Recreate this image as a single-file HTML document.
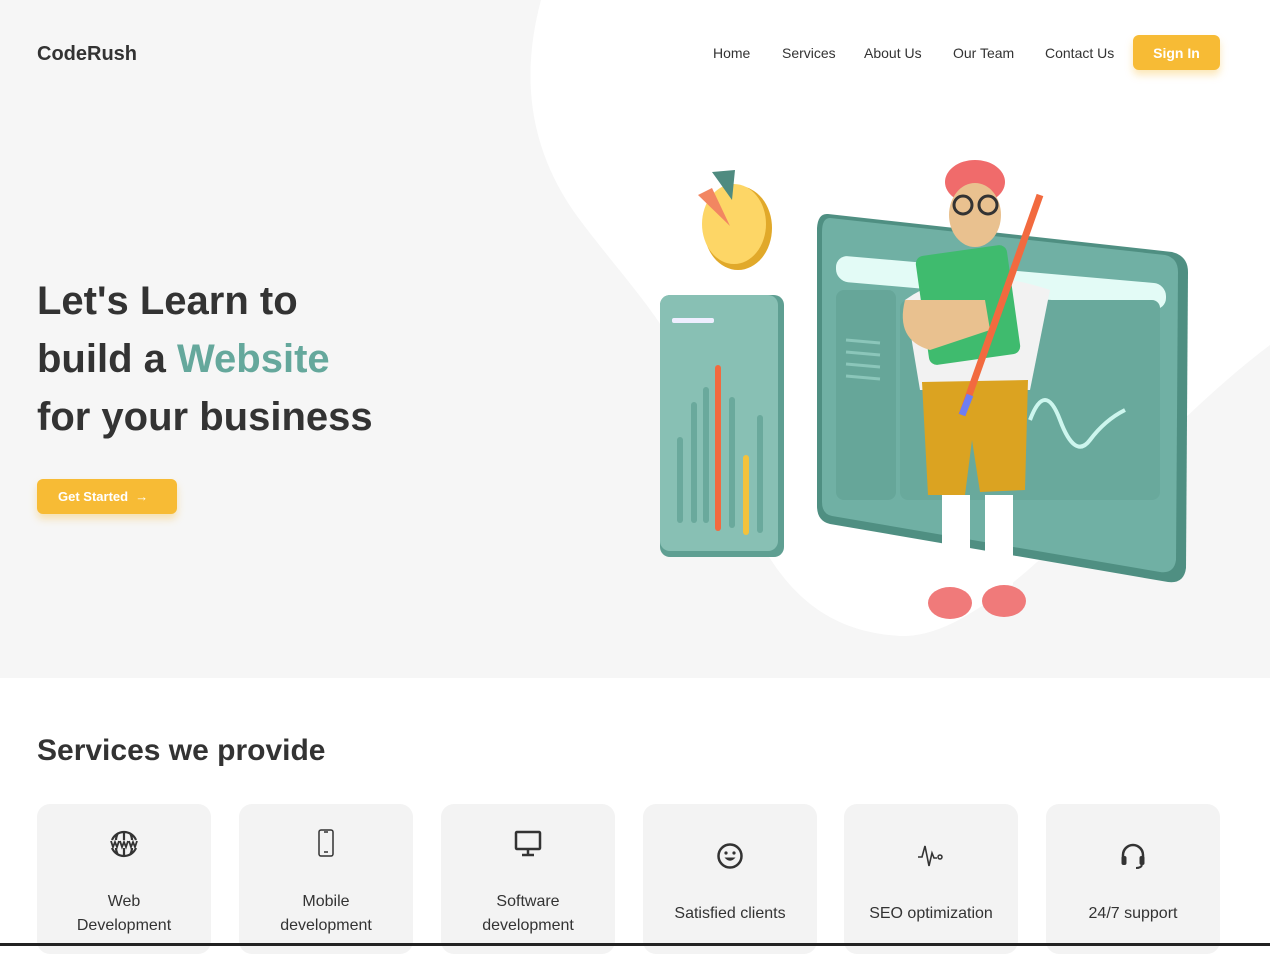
<!DOCTYPE html>
<html><head><meta charset="utf-8"><style>
*{margin:0;padding:0;box-sizing:border-box}
body{width:1270px;height:946px;overflow:hidden;background:#fff;font-family:"Liberation Sans",sans-serif;color:#333;position:relative}
.hero{position:absolute;left:0;top:0;width:1270px;height:678px;background:#f6f6f6;overflow:hidden}
.logo{position:absolute;left:37px;top:43px;font-size:20px;font-weight:bold;color:#333}
nav{position:absolute;top:45px;font-size:14px;color:#333}
nav span{position:absolute;white-space:nowrap}
.signin{position:absolute;left:1133px;top:35px;width:87px;height:35px;background:#f7bb35;border-radius:6px;color:#fff;font-weight:bold;font-size:14px;text-align:center;line-height:36px;box-shadow:0 5px 8px rgba(247,187,53,.35)}
h1{position:absolute;left:37px;top:272px;font-size:40px;line-height:58px;font-weight:bold;color:#333}
h1 em{font-style:normal;color:#65a89c}
.gs{position:absolute;left:37px;top:479px;width:140px;height:35px;background:#f7bb35;border-radius:6px;color:#fff;font-weight:bold;font-size:13px;line-height:36px;padding-left:21px;box-shadow:0 5px 8px rgba(247,187,53,.35)}
h2{position:absolute;left:37px;top:734px;font-size:30px;font-weight:bold;color:#333}
.card{position:absolute;top:804px;width:174px;height:150px;background:#f3f3f3;border-radius:13px;text-align:center;font-size:16px;color:#333}
.card svg{position:absolute;left:72px;top:25px}
.card .t{position:absolute;left:0;right:0;top:86px;line-height:24px}
.card .t1{top:98px}
.line{position:absolute;left:0;top:943px;width:1270px;height:3px;background:#222}
</style></head><body>
<div class="hero">
<svg width="1270" height="678" style="position:absolute;left:0;top:0">
<path d="M541 0 C525 60 520 140 580 220 C640 300 680 330 720 450 C760 560 800 630 900 636 C1000 640 1130 450 1270 345 L1270 0 Z" fill="#fff"/>
<rect x="660" y="295" width="124" height="262" rx="10" fill="#5f9f92"/>
<rect x="660" y="295" width="118" height="256" rx="10" fill="#88c0b4"/>
<rect x="672" y="318" width="42" height="5" rx="2" fill="#eef"/>
<g stroke-linecap="round" stroke-width="6">
<line x1="680" y1="440" x2="680" y2="520" stroke="#6aa99c"/><line x1="694" y1="405" x2="694" y2="520" stroke="#6aa99c"/><line x1="706" y1="390" x2="706" y2="520" stroke="#6aa99c"/>
<line x1="718" y1="368" x2="718" y2="528" stroke="#f26a3f"/><line x1="732" y1="400" x2="732" y2="525" stroke="#6aa99c"/><line x1="746" y1="458" x2="746" y2="532" stroke="#f3c23b"/><line x1="760" y1="418" x2="760" y2="530" stroke="#6aa99c"/>
</g>
<ellipse cx="738" cy="228" rx="34" ry="42" fill="#e1a92a"/>
<ellipse cx="734" cy="224" rx="32" ry="40" fill="#fdd666"/>
<path d="M730 226 L698 195 L712 188 Z" fill="#f28661"/>
<path d="M712 172 L735 170 L732 200 Z" fill="#4f8b80"/>
<path d="M828 214 L1172 252 Q1188 256 1188 272 L1186 568 Q1184 584 1168 582 L830 524 Q817 521 817 506 L817 228 Q818 213 828 214 Z" fill="#4f8f82"/>
<path d="M830 218 L1165 255 Q1178 258 1178 272 L1176 560 Q1174 574 1160 572 L832 516 Q822 514 822 502 L822 232 Q822 218 830 218 Z" fill="#70b0a4"/>
<rect x="836" y="256" width="330" height="26" rx="12" fill="#e3fbf6" transform="skewY(5) translate(0,-74)"/>
<rect x="836" y="290" width="60" height="210" rx="8" fill="#66a699"/>
<rect x="900" y="300" width="260" height="200" rx="8" fill="#69a99c"/>
<g stroke="#8bc6ba" stroke-width="3"><line x1="846" y1="340" x2="880" y2="343"/><line x1="846" y1="352" x2="880" y2="355"/><line x1="846" y1="364" x2="880" y2="367"/><line x1="846" y1="376" x2="880" y2="379"/></g>
<path d="M1030 420 Q1045 380 1060 420 T1090 440 T1125 410" stroke="#cdf6ee" stroke-width="4" fill="none"/>
<ellipse cx="975" cy="182" rx="30" ry="22" fill="#f06b6b"/>
<ellipse cx="975" cy="215" rx="26" ry="32" fill="#e9c18f"/>
<circle cx="963" cy="205" r="9" fill="none" stroke="#333" stroke-width="3"/><circle cx="988" cy="205" r="9" fill="none" stroke="#333" stroke-width="3"/>
<path d="M905 300 Q960 260 1050 290 L1030 390 L920 390 Z" fill="#f2f2f2"/>
<rect x="922" y="250" width="92" height="110" rx="8" fill="#3fbb6e" transform="rotate(-8 968 305)"/>
<path d="M905 300 Q895 340 930 350 L990 330 L985 300 Z" fill="#e9c18f"/>
<path d="M922 382 L1028 380 L1025 490 L980 492 L972 440 L965 495 L928 495 Z" fill="#dba321"/>
<line x1="962" y1="415" x2="1040" y2="195" stroke="#f26a3f" stroke-width="7"/>
<line x1="962" y1="415" x2="970" y2="395" stroke="#6e7ef2" stroke-width="7"/>
<rect x="942" y="495" width="28" height="90" fill="#fff"/><rect x="985" y="495" width="28" height="90" fill="#fff"/>
<ellipse cx="950" cy="603" rx="22" ry="16" fill="#f07a7a"/><ellipse cx="1004" cy="601" rx="22" ry="16" fill="#f07a7a"/>
</svg>
<div class="logo">CodeRush</div>
<nav><span style="left:713px">Home</span><span style="left:782px">Services</span><span style="left:864px">About Us</span><span style="left:953px">Our Team</span><span style="left:1045px">Contact Us</span></nav>
<div class="signin">Sign In</div>
<h1>Let's Learn to<br>build a <em>Website</em><br>for your business</h1>
<div class="gs">Get Started &nbsp;→</div>
</div>
<h2>Services we provide</h2>
<div class="card" style="left:37px"><svg width="30" height="30" viewBox="0 0 30 30"><path d="M3 11 A13 13 0 0 1 27 11 M3 19 A13 13 0 0 0 27 19 M15 2 V11 M15 19 V28 M9 4 Q7 8 7 11 M21 4 Q23 8 23 11 M9 26 Q7 22 7 19 M21 26 Q23 22 23 19" fill="none" stroke="#333" stroke-width="2.2"/><path d="M2 12 L4 18 L6 13 L8 18 L10 12 M11 12 L13 18 L15 13 L17 18 L19 12 M20 12 L22 18 L24 13 L26 18 L28 12" fill="none" stroke="#333" stroke-width="1.8"/></svg><div class="t">Web<br>Development</div></div>
<div class="card" style="left:239px"><svg width="30" height="30" viewBox="0 0 30 30"><rect x="8" y="1" width="14" height="26" rx="2" fill="none" stroke="#333" stroke-width="1.5"/><line x1="13" y1="23" x2="17" y2="23" stroke="#333" stroke-width="1.5"/><line x1="13" y1="3" x2="17" y2="3" stroke="#333" stroke-width="1.5"/></svg><div class="t">Mobile<br>development</div></div>
<div class="card" style="left:441px"><svg width="30" height="30" viewBox="0 0 30 30"><rect x="3" y="3" width="24" height="17" rx="1" fill="none" stroke="#333" stroke-width="2.5"/><line x1="15" y1="20" x2="15" y2="25" stroke="#333" stroke-width="2.5"/><line x1="9" y1="26" x2="21" y2="26" stroke="#333" stroke-width="2.5"/></svg><div class="t">Software<br>development</div></div>
<div class="card" style="left:643px"><svg width="30" height="30" viewBox="0 0 30 30" style="top:37px"><circle cx="15" cy="15" r="11.5" fill="none" stroke="#333" stroke-width="2.5"/><circle cx="11" cy="12" r="1.6" fill="#333"/><circle cx="19" cy="12" r="1.6" fill="#333"/><path d="M9.5 16.5 H20.5 Q15 23 9.5 16.5Z" fill="#333"/></svg><div class="t t1">Satisfied clients</div></div>
<div class="card" style="left:844px"><svg width="30" height="30" viewBox="0 0 30 30" style="top:37px"><path d="M2 16 H6 L9 5 L13 25 L16 12 L18 17 H21" fill="none" stroke="#333" stroke-width="1.6"/><circle cx="24" cy="16" r="2" fill="none" stroke="#333" stroke-width="1.5"/></svg><div class="t t1">SEO optimization</div></div>
<div class="card" style="left:1046px"><svg width="30" height="30" viewBox="0 0 30 30" style="top:37px"><path d="M5 17 V14 A10 10 0 0 1 25 14 V17" fill="none" stroke="#333" stroke-width="2.5"/><rect x="3.5" y="15" width="5" height="9" rx="2" fill="#333"/><rect x="21.5" y="15" width="5" height="9" rx="2" fill="#333"/><path d="M24 24 Q23 27 18 27" fill="none" stroke="#333" stroke-width="2"/></svg><div class="t t1">24/7 support</div></div>
<div class="line"></div>
</body></html>
